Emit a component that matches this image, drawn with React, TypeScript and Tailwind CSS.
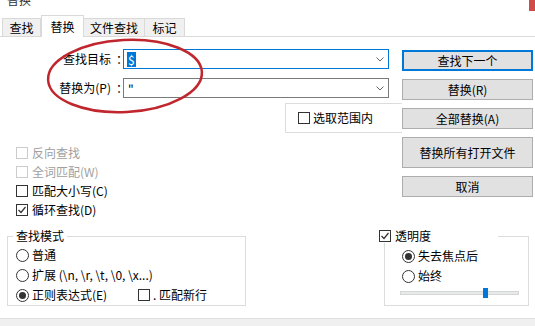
import React from "react";

function Check({ checked = false, disabled = false }: { checked?: boolean; disabled?: boolean }) {
  return (
    <span
      className={`w-[12px] h-[12px] border ${
        disabled ? "border-[#cccccc]" : "border-[#333333]"
      } bg-white flex items-center justify-center shrink-0`}
    >
      {checked && (
        <svg width="10" height="10" viewBox="0 0 10 10">
          <path d="M1.5 5 L4 7.5 L8.5 2" fill="none" stroke="#333" strokeWidth="1.2" />
        </svg>
      )}
    </span>
  );
}

function Radio({ on = false }: { on?: boolean }) {
  return (
    <span className="w-[13px] h-[13px] rounded-full border border-[#333333] bg-white flex items-center justify-center shrink-0">
      {on && <span className="w-[7px] h-[7px] rounded-full bg-[#333333]" />}
    </span>
  );
}

function Chevron() {
  return (
    <svg width="8" height="5" viewBox="0 0 8 5" className="shrink-0">
      <path d="M0.5 0.5 L4 4 L7.5 0.5" fill="none" stroke="#666" strokeWidth="1" />
    </svg>
  );
}

function Btn({ children, primary = false, tall = false }: { children: React.ReactNode; primary?: boolean; tall?: boolean }) {
  return (
    <div
      className={`w-full ${tall ? "h-[31px]" : "h-[21px]"} ${
        primary ? "border-2 border-[#0078d7]" : "border border-[#adadad]"
      } bg-[#e1e1e1] flex items-center justify-center text-[12px] leading-[14px] text-black`}
    >
      {children}
    </div>
  );
}

export default function App() {
  return (
    <div className="relative w-[535px] h-[326px] bg-white overflow-hidden flex flex-col text-[12px] text-black font-['Noto_Sans_CJK_SC','Noto_Sans',sans-serif]">
      {/* title strip */}
      <div className="h-[15px] flex justify-between items-start shrink-0">
        <div className="h-[7px] overflow-hidden pl-[7px]">
          <div className="text-[12px] leading-[12px] mt-[-6px] text-[#333]">替换</div>
        </div>
        <div className="w-[6px] h-[11px] bg-[#d24b4b]" />
      </div>

      {/* tabs */}
      <div className="h-[22px] flex items-end border-b border-[#d9d9d9] pl-[2px] shrink-0">
        <div className="w-[39px] h-[18px] border border-b-0 border-[#d9d9d9] bg-[#f0f0f0] flex items-center justify-center leading-[14px]">
          查找
        </div>
        <div className="w-[43px] h-[22px] mb-[-1px] border border-b-0 border-[#d9d9d9] bg-white flex items-center justify-center leading-[14px]">
          替换
        </div>
        <div className="w-[61px] h-[18px] border border-b-0 border-l-0 border-[#d9d9d9] bg-[#f0f0f0] flex items-center justify-center leading-[14px]">
          文件查找
        </div>
        <div className="w-[40px] h-[18px] border border-b-0 border-l-0 border-[#d9d9d9] bg-[#f0f0f0] flex items-center justify-center leading-[14px]">
          标记
        </div>
      </div>

      {/* main grid */}
      <div className="grid grid-cols-[402px_131px] shrink-0">
        <div className="flex flex-col">
          <div className="mt-[12px] h-[20px] flex items-center">
            <div className="w-[123px] text-right leading-[14px]">
              查找目标<span className="inline-block translate-x-[5px]">：</span>
            </div>
            <div className="w-[266px] h-[20px] border border-[#0078d7] flex items-center pl-[3px] pr-[4px]">
              <span className="bg-[#0078d7] text-white leading-[15px] px-[1px]">$</span>
              <span className="flex-1" />
              <Chevron />
            </div>
          </div>
          <div className="mt-[9px] h-[20px] flex items-center">
            <div className="w-[123px] text-right leading-[14px]">
              替换为(P)<span className="inline-block translate-x-[5px]">：</span>
            </div>
            <div className="w-[266px] h-[20px] border border-[#7a7a7a] flex items-center pl-[4px] pr-[4px]">
              <span className="leading-[15px]">"</span>
              <span className="flex-1" />
              <Chevron />
            </div>
          </div>
          <div className="mt-[5px] ml-[285px] w-[117px] h-[30px] border-l border-y border-[#dcdcdc] flex items-center pl-[12px] gap-[3px]">
            <Check />
            <span className="leading-[14px]">选取范围内</span>
          </div>
          <div className="mt-[10px] flex flex-col">
            <div className="h-[19px] flex items-center pl-[16px] gap-[4px] text-[#a0a0a0]">
              <Check disabled />
              <span className="leading-[14px]">反向查找</span>
            </div>
            <div className="h-[19px] flex items-center pl-[16px] gap-[4px] text-[#a0a0a0]">
              <Check disabled />
              <span className="leading-[14px]">全词匹配(W)</span>
            </div>
            <div className="h-[19px] flex items-center pl-[16px] gap-[4px]">
              <Check />
              <span className="leading-[14px]">匹配大小写(C)</span>
            </div>
            <div className="h-[19px] flex items-center pl-[16px] gap-[4px]">
              <Check checked />
              <span className="leading-[14px]">循环查找(D)</span>
            </div>
          </div>
        </div>

        <div className="pt-[13px] flex flex-col gap-[8px]">
          <Btn primary>查找下一个</Btn>
          <Btn>替换(R)</Btn>
          <Btn>全部替换(A)</Btn>
          <Btn tall>替换所有打开文件</Btn>
          <Btn>取消</Btn>
        </div>
      </div>

      {/* bottom groups */}
      <div className="mt-[10px] flex items-start shrink-0">
        <fieldset className="ml-[7px] w-[239px] border border-[#dcdcdc] pl-[8px] pt-[2px]">
          <legend className="-ml-[3px] px-[3px] leading-[14px]">查找模式</legend>
          <div className="h-[20px] flex items-center gap-[3px]">
            <Radio />
            <span className="leading-[14px]">普通</span>
          </div>
          <div className="h-[20px] flex items-center gap-[3px]">
            <Radio />
            <span className="leading-[14px]">扩展 (\n, \r, \t, \0, \x...)</span>
          </div>
          <div className="h-[20px] flex items-center">
            <div className="w-[122px] flex items-center gap-[3px]">
              <Radio on />
              <span className="leading-[14px]">正则表达式(E)</span>
            </div>
            <div className="flex items-center gap-[3px]">
              <Check />
              <span className="leading-[14px]">. 匹配新行</span>
            </div>
          </div>
        </fieldset>

        <fieldset className="ml-[138px] w-[145px] border border-[#dcdcdc] pl-[17px] pt-[3px] pb-[7px]">
          <legend className="-ml-[23px] w-[119px] leading-[14px] flex items-center gap-[4px] bg-white">
            <Check checked />
            <span>透明度</span>
          </legend>
          <div className="h-[20px] flex items-center gap-[3px]">
            <Radio on />
            <span className="leading-[14px]">失去焦点后</span>
          </div>
          <div className="h-[20px] flex items-center gap-[3px]">
            <Radio />
            <span className="leading-[14px]">始终</span>
          </div>
          <div className="mt-[2px] h-[10px] flex items-center -ml-[2px]">
            <div className="relative w-[119px] h-[4px] bg-[#e7eaea] border border-[#d6d6d6]">
              <div className="absolute left-[82px] top-[-4px] w-[5px] h-[10px] bg-[#0078d7]" />
            </div>
          </div>
        </fieldset>
      </div>

      <div className="mt-auto h-[8px] bg-[#f0f0f0] border-t border-[#dfdfdf] shrink-0" />

      {/* red annotation ellipse */}
      <svg className="absolute left-0 top-0 pointer-events-none" width="535" height="326" viewBox="0 0 535 326">
        <ellipse
          cx="125"
          cy="76"
          rx="77"
          ry="36"
          transform="rotate(-3 125 76)"
          fill="none"
          stroke="#c0262d"
          strokeWidth="2.5"
        />
      </svg>
    </div>
  );
}
